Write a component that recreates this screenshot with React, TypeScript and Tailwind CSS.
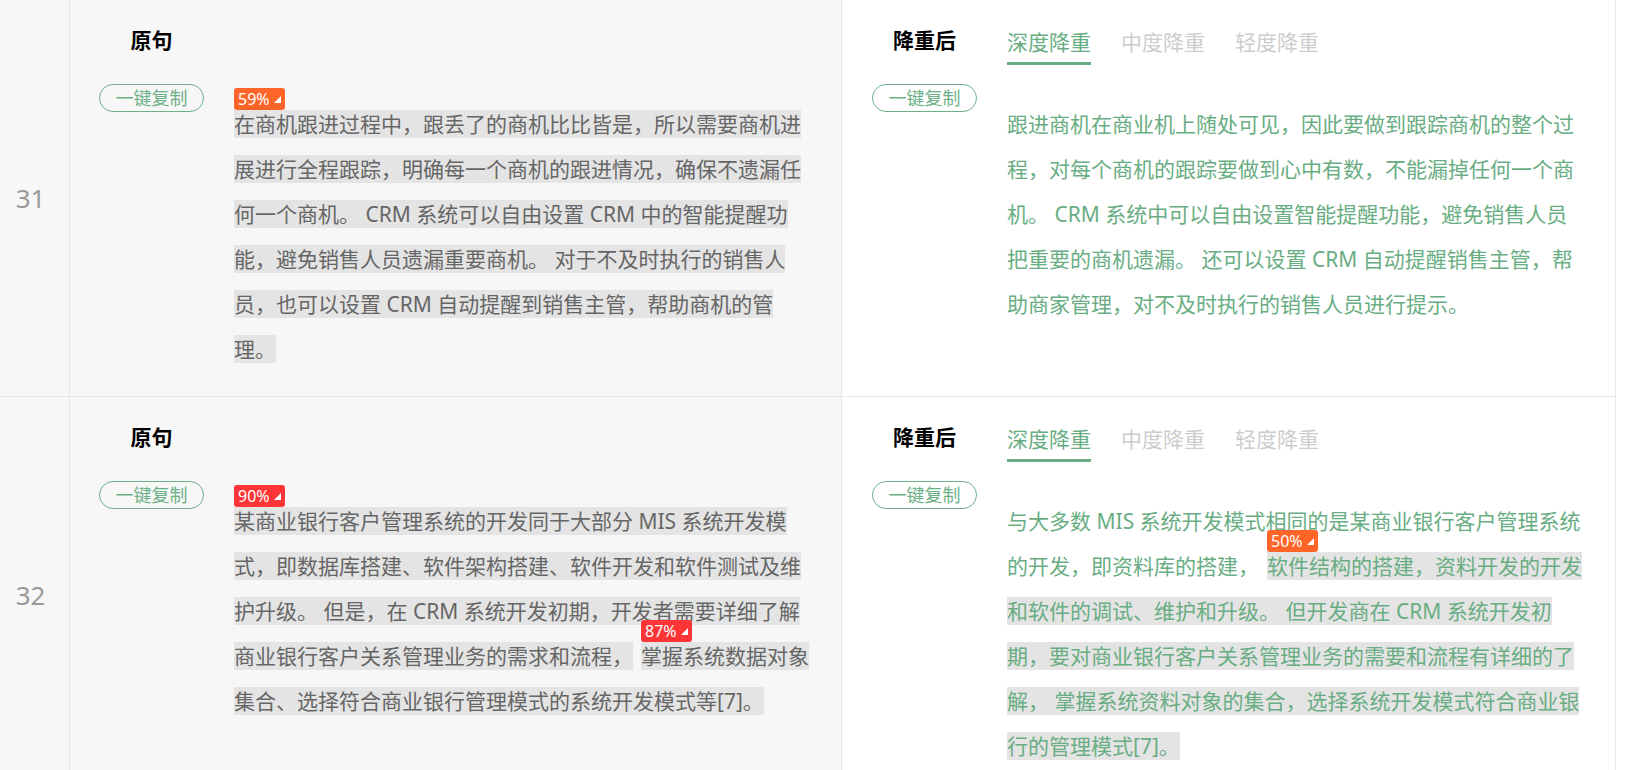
type Seg = {
  t: string;
  hl?: boolean;
  gap?: boolean;
  badge?: { v: string; red?: boolean };
};

type Row = { num: number; left: Seg[][]; right: Seg[][] };

const rows: Row[] = [
  {
    num: 31,
    left: [
      [{ t: '在商机跟进过程中，跟丢了的商机比比皆是，所以需要商机进', hl: true, badge: { v: '59%' } }],
      [{ t: '展进行全程跟踪，明确每一个商机的跟进情况，确保不遗漏任', hl: true }],
      [{ t: '何一个商机。 CRM 系统可以自由设置 CRM 中的智能提醒功', hl: true }],
      [{ t: '能，避免销售人员遗漏重要商机。 对于不及时执行的销售人', hl: true }],
      [{ t: '员，也可以设置 CRM 自动提醒到销售主管，帮助商机的管', hl: true }],
      [{ t: '理。', hl: true }],
    ],
    right: [
      [{ t: '跟进商机在商业机上随处可见，因此要做到跟踪商机的整个过' }],
      [{ t: '程，对每个商机的跟踪要做到心中有数，不能漏掉任何一个商' }],
      [{ t: '机。 CRM 系统中可以自由设置智能提醒功能，避免销售人员' }],
      [{ t: '把重要的商机遗漏。 还可以设置 CRM 自动提醒销售主管，帮' }],
      [{ t: '助商家管理，对不及时执行的销售人员进行提示。' }],
    ],
  },
  {
    num: 32,
    left: [
      [{ t: '某商业银行客户管理系统的开发同于大部分 MIS 系统开发模', hl: true, badge: { v: '90%', red: true } }],
      [{ t: '式，即数据库搭建、软件架构搭建、软件开发和软件测试及维', hl: true }],
      [{ t: '护升级。 但是，在 CRM 系统开发初期，开发者需要详细了解', hl: true }],
      [
        { t: '商业银行客户关系管理业务的需求和流程，', hl: true },
        { t: '掌握系统数据对象', hl: true, gap: true, badge: { v: '87%', red: true } },
      ],
      [{ t: '集合、选择符合商业银行管理模式的系统开发模式等[7]。', hl: true }],
    ],
    right: [
      [{ t: '与大多数 MIS 系统开发模式相同的是某商业银行客户管理系统' }],
      [
        { t: '的开发，即资料库的搭建，' },
        { t: '软件结构的搭建，资料开发的开发', hl: true, gap: true, badge: { v: '50%' } },
      ],
      [{ t: '和软件的调试、维护和升级。 但开发商在 CRM 系统开发初', hl: true }],
      [{ t: '期，要对商业银行客户关系管理业务的需要和流程有详细的了', hl: true }],
      [{ t: '解， 掌握系统资料对象的集合，选择系统开发模式符合商业银', hl: true }],
      [{ t: '行的管理模式[7]。', hl: true }],
    ],
  },
];

const Badge = ({ v, red }: { v: string; red?: boolean }) => (
  <span
    className={`absolute left-0 -top-[22px] flex h-[22px] w-[51px] items-center rounded-[3px] pl-[4px] text-[16px] leading-none text-white ${
      red ? 'bg-[#fe3537]' : 'bg-[#ff6429]'
    }`}
  >
    {v}
    <svg width="7" height="7" viewBox="0 0 7 7" className="ml-[4px]">
      <polygon points="7,0 7,7 0,7" fill="#fff" />
    </svg>
  </span>
);

const Lines = ({ lines }: { lines: Seg[][] }) => (
  <div className="leading-[45px] whitespace-pre">
    {lines.map((line, i) => (
      <div key={i}>
        {line.map((s, j) => (
          <span
            key={j}
            className={`relative ${s.hl ? 'bg-[#e4e4e4]' : ''} ${s.gap ? 'ml-[8px]' : ''}`}
          >
            {s.badge && <Badge v={s.badge.v} red={s.badge.red} />}
            {s.t}
          </span>
        ))}
      </div>
    ))}
  </div>
);

const CopyButton = () => (
  <button className="flex h-[28px] w-[105px] items-center justify-center rounded-full border border-[#6cb088] text-[18px] text-[#6cb088]">
    一键复制
  </button>
);

const App = () => {
  return (
    <div className="h-[770px] overflow-hidden bg-white font-['Noto_Sans','Noto_Sans_CJK_SC',sans-serif]">
      <div className="w-[1616px]">
        {rows.map((row) => (
          <div key={row.num} className="flex border-b border-[#e8e8e8]">
            <div className="flex w-[70px] shrink-0 items-center justify-center border-r border-[#e8e8e8] bg-[#f7f7f7] pr-[8px] text-[26px] text-[#999]">
              {row.num}
            </div>

            <div className="w-[772px] shrink-0 border-r border-[#e8e8e8] bg-[#f7f7f7] pl-[29px] pt-[25px] pb-[24px]">
              <div className="flex h-[40px]">
                <div className="w-[105px] text-center text-[21px] font-bold leading-[30px] text-black">原句</div>
              </div>
              <div className="mt-[19px] flex items-start">
                <CopyButton />
                <div className="ml-[30px] pt-[18px] text-[21px] text-[#666]">
                  <Lines lines={row.left} />
                </div>
              </div>
            </div>

            <div className="w-[774px] shrink-0 border-r border-[#e8e8e8] bg-white pl-[30px] pt-[25px] pb-[24px]">
              <div className="flex h-[40px]">
                <div className="w-[105px] text-center text-[21px] font-bold leading-[30px] text-black">降重后</div>
                <div className="ml-[30px] flex gap-[30px] text-[21px] leading-[30px]">
                  <div className="border-b-[3px] border-[#69ad83] pt-[2px] pb-[5px] text-[#69ad83]">深度降重</div>
                  <div className="border-b-[3px] border-transparent pt-[2px] pb-[5px] text-[#cdcdcd]">中度降重</div>
                  <div className="border-b-[3px] border-transparent pt-[2px] pb-[5px] text-[#cdcdcd]">轻度降重</div>
                </div>
              </div>
              <div className="mt-[19px] flex items-start">
                <CopyButton />
                <div className="ml-[30px] pt-[18px] text-[21px] text-[#69ad83]">
                  <Lines lines={row.right} />
                </div>
              </div>
            </div>
          </div>
        ))}
      </div>
    </div>
  );
};

export default App;
